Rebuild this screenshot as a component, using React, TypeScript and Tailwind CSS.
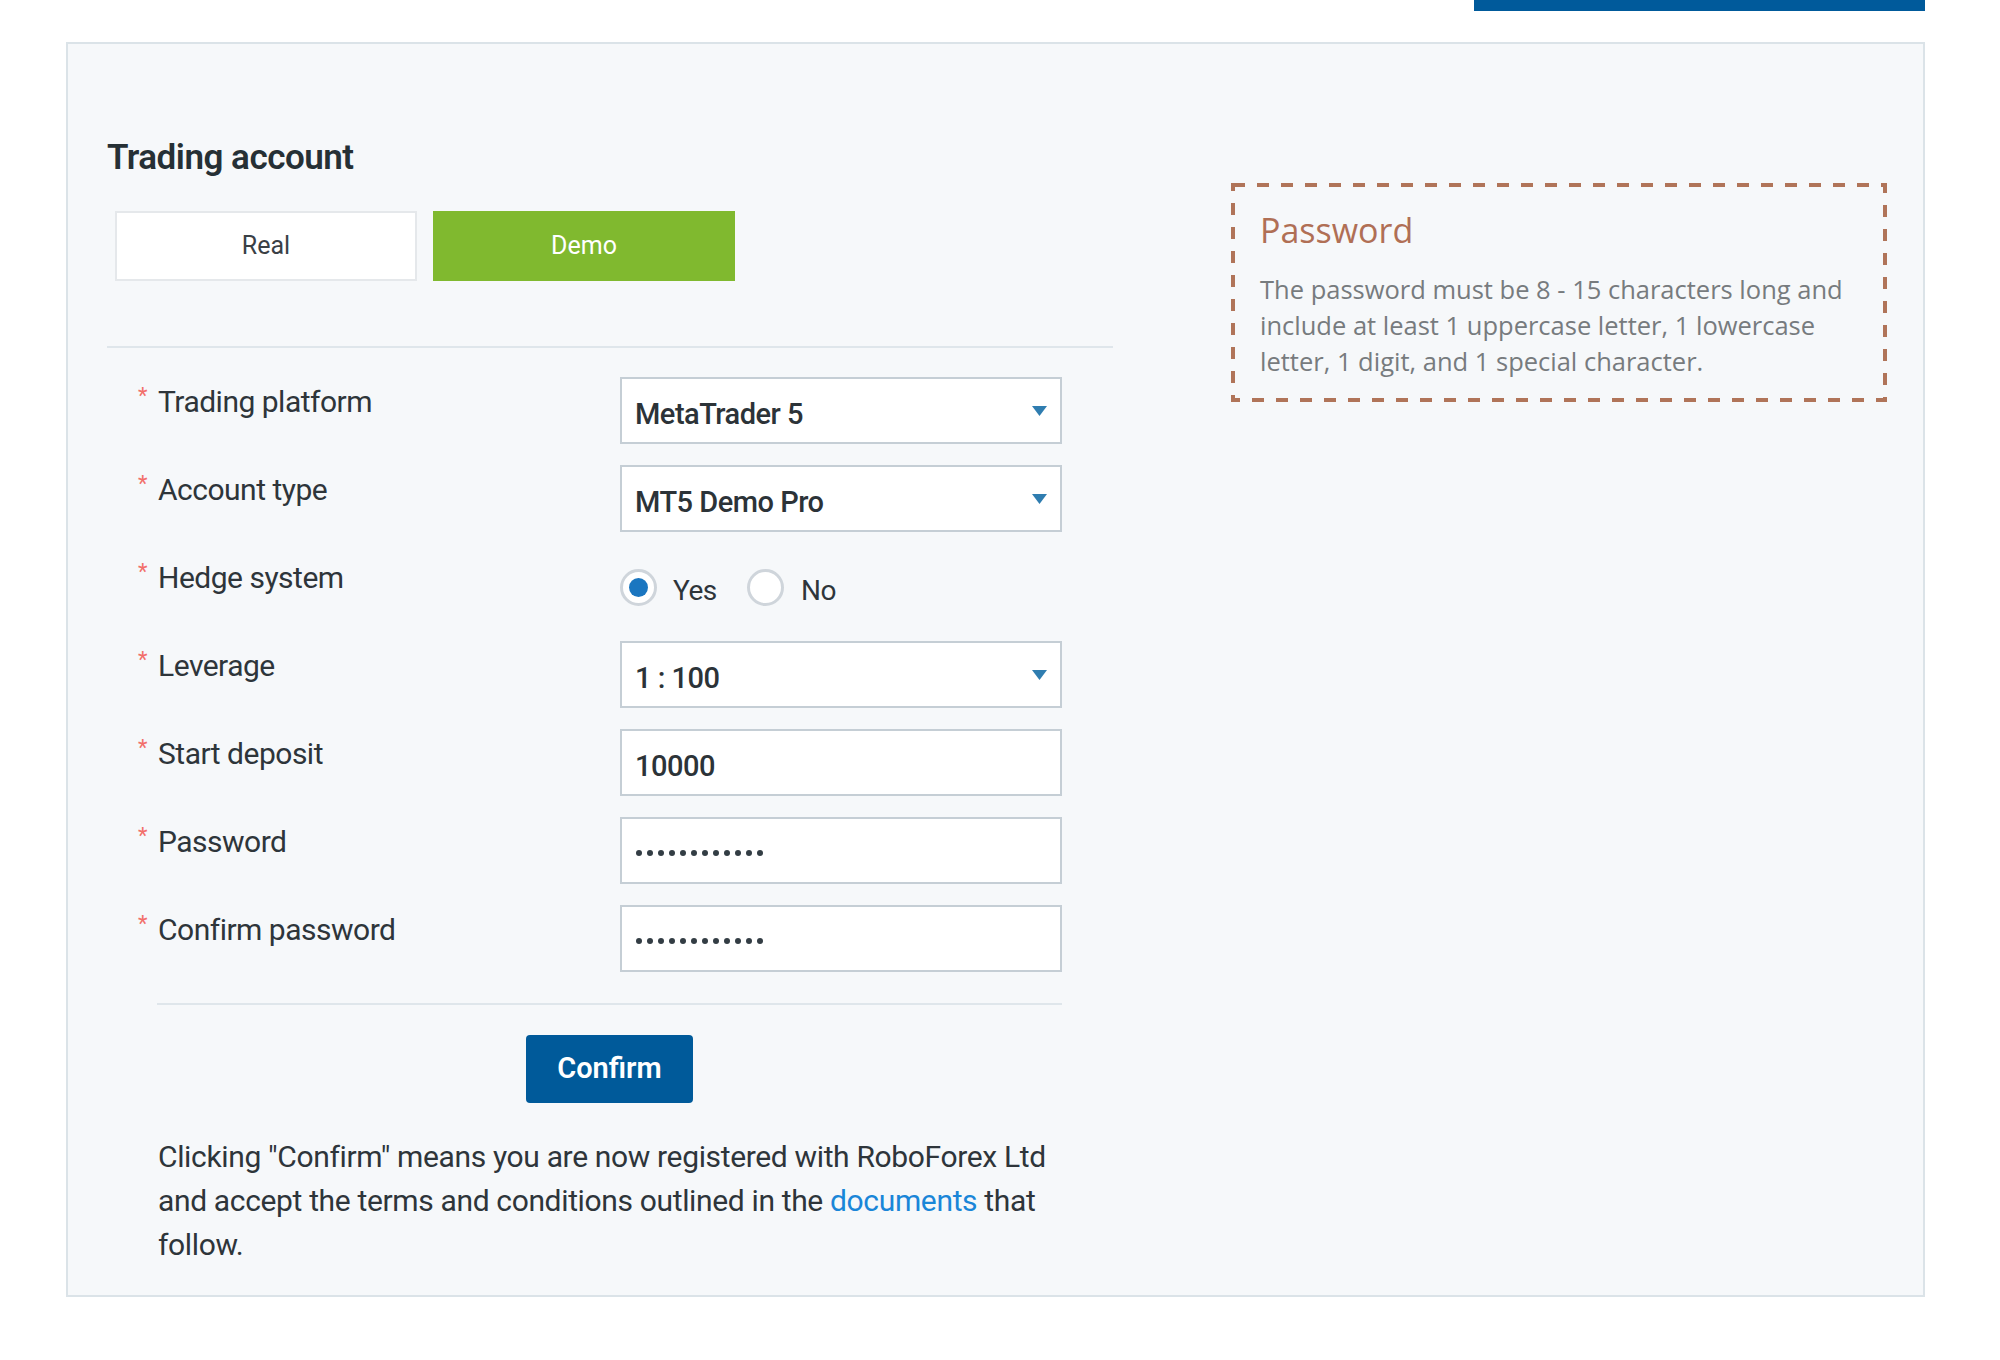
import { useState } from "react";

const rows = [
  { label: "Trading platform", kind: "select", value: "MetaTrader 5" },
  { label: "Account type", kind: "select", value: "MT5 Demo Pro" },
  { label: "Hedge system", kind: "radio", value: "" },
  { label: "Leverage", kind: "select", value: "1 : 100" },
  { label: "Start deposit", kind: "input", value: "10000" },
  { label: "Password", kind: "password", value: "" },
  { label: "Confirm password", kind: "password", value: "" },
];

function Caret() {
  return (
    <svg width="15" height="10" viewBox="0 0 15 10" className="shrink-0">
      <path d="M0 0h15L7.5 10z" fill="#2f7db0" />
    </svg>
  );
}

function Radio({ checked }: { checked: boolean }) {
  return (
    <span className="flex h-[37px] w-[37px] items-center justify-center rounded-full border-[3px] border-[#cfd5db] bg-white">
      {checked && <span className="h-[19px] w-[19px] rounded-full bg-[#1a76c0]" />}
    </span>
  );
}

function Control({ kind, value }: { kind: string; value: string }) {
  const [hedge, setHedge] = useState(true);

  if (kind === "radio") {
    return (
      <div className="flex h-[67px] w-[442px] items-center pt-[2px]">
        <button className="flex w-[127px] items-center" onClick={() => setHedge(true)}>
          <Radio checked={hedge} />
          <span className="ml-[16px] pt-[6px] text-[28px] leading-[34px] tracking-[-0.5px] text-[#2e353a]">Yes</span>
        </button>
        <button className="flex items-center" onClick={() => setHedge(false)}>
          <Radio checked={!hedge} />
          <span className="ml-[17px] pt-[6px] text-[28px] leading-[34px] tracking-[-0.5px] text-[#2e353a]">No</span>
        </button>
      </div>
    );
  }

  return (
    <div className="flex h-[67px] w-[442px] items-center justify-between border-2 border-[#c5ced5] bg-white pl-[13px] pr-[13px]">
      {kind === "password" ? (
        <span className="ml-[1px] mt-[5px] flex gap-[5px]">
          {Array.from({ length: 12 }).map((_, i) => (
            <span key={i} className="h-[6px] w-[6px] rounded-full bg-[#333d44]" />
          ))}
        </span>
      ) : (
        <span className="pt-[7px] text-[29px] font-medium leading-[34px] tracking-[-0.5px] text-[#2c3338]">{value}</span>
      )}
      {kind === "select" && <Caret />}
    </div>
  );
}

export default function App() {
  const [mode, setMode] = useState<"real" | "demo">("demo");

  const tab = (active: boolean) =>
    active
      ? "flex h-[70px] w-[302px] items-center justify-center bg-[#80b92f] text-[25px] text-white"
      : "flex h-[70px] w-[302px] items-center justify-center border-2 border-[#e5e8eb] bg-white text-[25px] text-[#3a4045]";

  return (
    <div className="min-h-[1360px] w-[2000px] bg-white font-[family-name:Roboto,sans-serif]">
      <div className="flex justify-end pr-[75px]">
        <div className="h-[11px] w-[451px] bg-[#005a9b]" />
      </div>

      <div className="ml-[66px] mt-[31px] flex w-[1859px] border-2 border-[#dbe3e8] bg-[#f6f8fa] pb-[28px] pl-[39px] pt-[94px]">
        {/* Form column */}
        <div className="w-[1006px] shrink-0">
          <h2 className="text-[35px] font-semibold leading-[40px] tracking-[-0.5px] text-[#263035]">Trading account</h2>

          <div className="ml-[8px] mt-[33px] flex gap-[16px]">
            <button onClick={() => setMode("real")} className={tab(mode === "real")}>
              Real
            </button>
            <button onClick={() => setMode("demo")} className={tab(mode === "demo")}>
              Demo
            </button>
          </div>

          <div className="mt-[65px] h-[2px] w-full bg-[#dfe6eb]" />

          <div className="mt-[29px] flex flex-col gap-[21px] pl-[31px]">
            {rows.map((row) => (
              <div key={row.label} className="flex h-[67px]">
                <div className="flex w-[482px] items-start">
                  <span className="mt-[8px] w-[20px] text-[22px] leading-none text-[#f26f6a]">*</span>
                  <span className="pt-[5px] text-[30px] leading-[40px] tracking-[-0.5px] text-[#2e353a]">{row.label}</span>
                </div>
                <Control kind={row.kind} value={row.value} />
              </div>
            ))}
          </div>

          <div className="ml-[50px] mt-[31px] h-[2px] w-[905px] bg-[#dfe6eb]" />

          <div className="ml-[50px] mt-[30px] flex w-[905px] justify-center">
            <button className="h-[68px] w-[167px] rounded-[4px] bg-[#005a9a] text-[29px] font-semibold text-white">
              Confirm
            </button>
          </div>

          <p className="ml-[51px] mt-[32px] w-[920px] text-[30px] leading-[44px] tracking-[-0.35px] text-[#2e353a]">
            Clicking "Confirm" means you are now registered with RoboForex Ltd
            <br />
            and accept the terms and conditions outlined in the <a className="text-[#1a86d8]">documents</a> that
            <br />
            follow.
          </p>
        </div>

        {/* Password hint */}
        <div className="relative ml-[118px] mt-[45px] h-[219px] w-[656px] pb-[18px] pl-[29px] pr-[29px] pt-[27px] font-[family-name:'Open_Sans',sans-serif]">
          <svg className="absolute left-0 top-0" width="656" height="219" viewBox="0 0 656 219">
            <rect x="2" y="2" width="652" height="215" fill="none" stroke="#b07459" strokeWidth="4" strokeDasharray="12 12" />
          </svg>
          <div className="text-[34px] leading-[40px] text-[#b06f55]">Password</div>
          <p className="mt-[21px] text-[25.5px] leading-[36px] text-[#777b7e]">
            The password must be 8 - 15 characters long and
            <br />
            include at least 1 uppercase letter, 1 lowercase
            <br />
            letter, 1 digit, and 1 special character.
          </p>
        </div>
      </div>
    </div>
  );
}
